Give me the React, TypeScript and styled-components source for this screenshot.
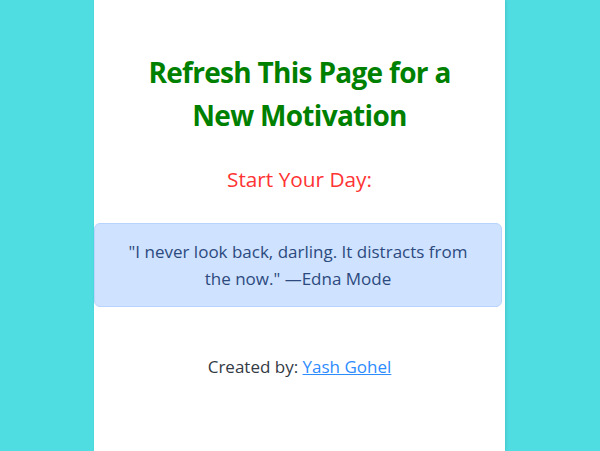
import React from 'react';
import styled, { createGlobalStyle } from 'styled-components';

const GlobalStyle = createGlobalStyle`
    html, body {
        margin: 0;
        padding: 0;
        height: 100%;
        background-color: #4fdde2;
        font-family: "Open Sans", "Noto Sans", sans-serif;
    }
    #root {
        height: 100%;
    }
`;

const Page = styled.div`
    display: flex;
    justify-content: center;
    height: 451px;
    overflow: hidden;
`;

const Column = styled.main`
    width: 411px;
    margin-left: -1px;
    background-color: #ffffff;
    box-shadow: 1px 0 3px rgba(0, 0, 0, 0.12);
    display: flex;
    flex-direction: column;
    align-items: center;
    text-align: center;
    padding-top: 51px;
    box-sizing: border-box;
`;

const Title = styled.h1`
    margin: 0;
    color: #008000;
    font-size: 28px;
    font-weight: 700;
    line-height: 43px;
    letter-spacing: -0.7px;
    width: 330px;
`;

const Subtitle = styled.h2`
    margin: 27px 0 0;
    color: #ff3333;
    font-size: 20.8px;
    font-weight: 400;
    line-height: 30px;
`;

const QuoteBox = styled.div`
    margin-top: 29px;
    align-self: stretch;
    margin-right: 3px;
    background-color: #cfe2ff;
    border: 1px solid #b6d4fe;
    border-radius: 6px;
    color: #2c4a7e;
    font-size: 17px;
    line-height: 27px;
    padding: 14px 20px;
`;

const Footer = styled.p`
    margin: 48px 0 0;
    color: #333a44;
    font-size: 17px;
    line-height: 24px;
`;

const Author = styled.a`
    color: #2d8cff;
    text-decoration: underline;
`;

const App: React.FC = () => {
    return (
        <>
            <GlobalStyle />
            <Page>
                <Column>
                    <Title>Refresh This Page for a New Motivation</Title>
                    <Subtitle>Start Your Day:</Subtitle>
                    <QuoteBox>
                        "I never look back, darling. It distracts from the now." —Edna Mode
                    </QuoteBox>
                    <Footer>
                        Created by: <Author href="#">Yash Gohel</Author>
                    </Footer>
                </Column>
            </Page>
        </>
    );
};

export default App;
